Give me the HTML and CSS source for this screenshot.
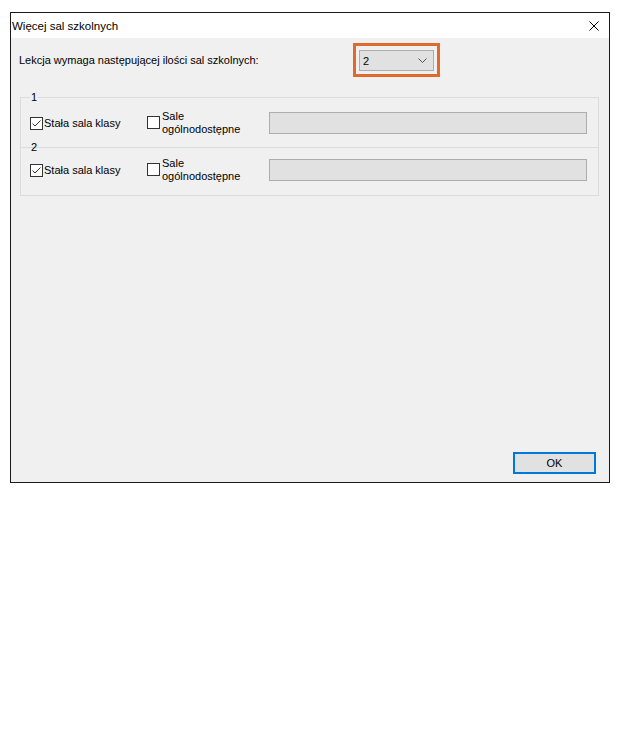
FILE: index.html
```html
<!DOCTYPE html>
<html lang="pl">
<head>
  <meta charset="UTF-8" />
  <title>Więcej sal szkolnych</title>
  <link rel="stylesheet" href="styles.css">
</head>
<body>
  <div class="window">
    <div class="titlebar">
      <span class="title">Więcej sal szkolnych</span>
      <svg class="close" width="10" height="10" viewBox="0 0 10 10">
        <path d="M0.5 0.5 L9.5 9.5 M9.5 0.5 L0.5 9.5" stroke="#000" stroke-width="1" fill="none"/>
      </svg>
    </div>

    <div class="content">
      <div class="top-row">
        <span class="label">Lekcja wymaga następującej ilości sal szkolnych:</span>
        <div class="highlight">
          <div class="combo">
            <span>2</span>
            <svg width="9" height="5" viewBox="0 0 9 5">
              <path d="M0.5 0.5 L4.5 4.5 L8.5 0.5" stroke="#555" stroke-width="1" fill="none"/>
            </svg>
          </div>
        </div>
      </div>

      <fieldset class="group group-first">
        <legend>1</legend>
        <div class="group-row">
          <label class="check">
            <span class="box checked">
              <svg width="11" height="11" viewBox="0 0 11 11"><path d="M1.5 5.5 L4 8 L9.5 2.5" stroke="#333" stroke-width="1" fill="none"/></svg>
            </span>
            Stała sala klasy
          </label>
          <label class="check check-multi">
            <span class="box"></span>
            <span>Sale<br>ogólnodostępne</span>
          </label>
          <div class="field"></div>
        </div>
      </fieldset>

      <fieldset class="group group-second">
        <legend>2</legend>
        <div class="group-row">
          <label class="check">
            <span class="box checked">
              <svg width="11" height="11" viewBox="0 0 11 11"><path d="M1.5 5.5 L4 8 L9.5 2.5" stroke="#333" stroke-width="1" fill="none"/></svg>
            </span>
            Stała sala klasy
          </label>
          <label class="check check-multi">
            <span class="box"></span>
            <span>Sale<br>ogólnodostępne</span>
          </label>
          <div class="field"></div>
        </div>
      </fieldset>

      <div class="footer">
        <button class="ok">OK</button>
      </div>
    </div>
  </div>
</body>
</html>
```

FILE: styles.css
```css
html, body {
  margin: 0;
  padding: 0;
  background: #fff;
  font-family: "Liberation Sans", Arial, sans-serif;
  font-size: 11px;
  color: #000;
}

.window {
  box-sizing: border-box;
  width: 600px;
  height: 471px;
  margin: 12px 0 0 10px;
  border: 1px solid #1a1a1a;
  display: flex;
  flex-direction: column;
}

.titlebar {
  height: 25px;
  background: #fff;
  display: flex;
  align-items: center;
  justify-content: space-between;
  padding: 0 10px 0 1px;
}

.title {
  font-size: 11.5px;
}

.content {
  flex: 1;
  background: #f0f0f0;
  display: flex;
  flex-direction: column;
  padding: 5px 0 8px 0;
}

.top-row {
  display: flex;
  align-items: center;
  padding-left: 8px;
}

.top-row .label {
  width: 334px;
}

.highlight {
  box-sizing: border-box;
  width: 87px;
  height: 34px;
  border: 3px solid #e06a2c;
  padding: 4px 3px 3px 3px;
}

.combo {
  box-sizing: border-box;
  height: 21px;
  background: #e1e1e1;
  border: 1px solid #adadad;
  display: flex;
  align-items: center;
  justify-content: space-between;
  padding: 0 6px 0 3px;
}

.group {
  margin: 0 10px 0 9px;
  padding: 0 0 0 9px;
  border: 1px solid #dcdcdc;
  min-width: 0;
  box-sizing: border-box;
}

.group legend {
  padding: 0 1px;
  line-height: 14px;
}

.group-first {
  margin-top: 13px;
  height: 58px;
}

.group-second {
  margin-top: -8px;
  height: 56px;
}

.group-first .group-row {
  margin-top: 6px;
}

.group-second .group-row {
  margin-top: 3px;
}

.group-row {
  display: flex;
  align-items: center;
}

.check {
  display: flex;
  align-items: center;
  gap: 1px;
  width: 117px;
}

.check-multi {
  width: 122px;
  align-items: flex-start;
  gap: 2px;
  line-height: 13px;
}

.check-multi .box {
  margin-top: 6px;
}

.box {
  box-sizing: border-box;
  width: 13px;
  height: 13px;
  border: 1px solid #333;
  background: #fff;
  display: flex;
  align-items: center;
  justify-content: center;
  flex-shrink: 0;
}

.field {
  box-sizing: border-box;
  width: 318px;
  height: 22px;
  background: #e1e1e1;
  border: 1px solid #adadad;
}

.footer {
  margin-top: auto;
  display: flex;
  justify-content: flex-end;
  padding-right: 13px;
}

.ok {
  box-sizing: border-box;
  width: 83px;
  height: 22px;
  background: #e1e1e1;
  border: 2px solid #0078d7;
  font-family: "Liberation Sans", Arial, sans-serif;
  font-size: 11px;
  color: #000;
  padding: 0;
}
```
